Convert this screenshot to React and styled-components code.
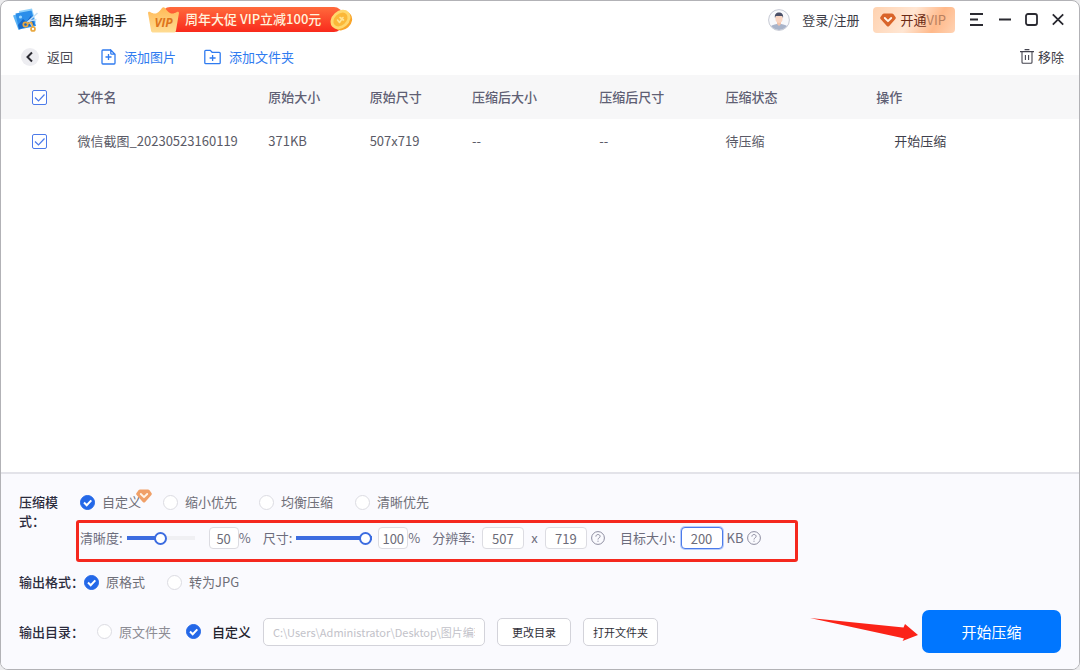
import React, { useState } from "react";
import styled, { createGlobalStyle } from "styled-components";

const files = [
  {
    id: 1,
    name: "微信截图_20230523160119",
    size: "371KB",
    dimension: "507x719",
    newSize: "--",
    newDimension: "--",
    status: "待压缩",
  },
];

const modes = ["自定义", "缩小优先", "均衡压缩", "清晰优先"];
const formats = ["原格式", "转为JPG"];

export default function App() {
  const [mode, setMode] = useState("自定义");
  const [format, setFormat] = useState("原格式");
  const [folder, setFolder] = useState("自定义");
  const [quality, setQuality] = useState(50);
  const [scale, setScale] = useState(100);

  return (
    <>
      <GlobalStyle />
      <Window>
        <TitleBar>
          <Logo />
          <Title>图片编辑助手</Title>
          <Promo href="#promo">
            <Crown />
            <PromoText>周年大促 VIP立减100元</PromoText>
            <Coin />
          </Promo>
          <Spacer />
          <Account type="button">
            <Avatar />
            登录/注册
          </Account>
          <VipButton type="button">
            <Gem />
            <span>
              开通<small>VIP</small>
            </span>
          </VipButton>
          <WindowControls />
        </TitleBar>

        <Toolbar>
          <ToolButton type="button" $color="#4a4a55">
            <BackCircle>
              <svg width="18" height="18" viewBox="0 0 18 18" fill="none">
                <path d="M11 4.5 6.500 9l4.500 4.500" stroke="#2b2b33" strokeWidth="2" />
              </svg>
            </BackCircle>
            返回
          </ToolButton>
          <ToolButton type="button" $color="#2f7bf0">
            <svg width="15" height="16" viewBox="0 0 15 16" fill="none" stroke="#2f7bf0" strokeWidth="1.3">
              <path d="M9.8 1H1.9a.9.9 0 0 0-.9.9v12.2c0 .5.4.9.9.9h11.2c.5 0 .9-.4.9-.9V5.2L9.8 1v3.4c0 .5.3.8.8.8H14M7.5 5v6M4.5 8h6" />
            </svg>
            添加图片
          </ToolButton>
          <ToolButton type="button" $color="#2f7bf0">
            <svg width="17" height="16" viewBox="0 0 17 16" fill="none" stroke="#2f7bf0" strokeWidth="1.3">
              <path d="M.8 13.8V2.2c0-.5.4-.9.9-.9h4.6l1.8 2h7.2c.5 0 .9.4.9.9v9.6c0 .5-.4.9-.9.9H1.7a.9.9 0 0 1-.9-.9ZM8.6 6v6M5.6 9h6" />
            </svg>
            添加文件夹
          </ToolButton>
          <Spacer />
          <RemoveButton type="button">
            <svg width="14" height="15" viewBox="0 0 14 15" fill="none" stroke="#44444f" strokeWidth="1.1">
              <path d="M0 2.6h14M4.6.6h4.8M2 2.6v10.6c0 .6.4 1 1 1h8c.6 0 1-.4 1-1V2.600M5.400 6v5M8.600 6v5" />
            </svg>
            移除
          </RemoveButton>
        </Toolbar>

        <Main>
          <FileTable>
            <colgroup>
              <col style={{ width: "7.1%" }} />
              <col style={{ width: "17.7%" }} />
              <col style={{ width: "9.4%" }} />
              <col style={{ width: "9.5%" }} />
              <col style={{ width: "11.8%" }} />
              <col style={{ width: "11.7%" }} />
              <col style={{ width: "14%" }} />
              <col />
            </colgroup>
            <thead>
              <tr>
                <th>
                  <CheckBox type="checkbox" aria-label="全选" defaultChecked />
                </th>
                <th>文件名</th>
                <th>原始大小</th>
                <th>原始尺寸</th>
                <th>压缩后大小</th>
                <th>压缩后尺寸</th>
                <th>压缩状态</th>
                <th>操作</th>
              </tr>
            </thead>
            <tbody>
              {files.map((file) => (
                <tr key={file.id}>
                  <td>
                    <CheckBox type="checkbox" aria-label={file.name} defaultChecked />
                  </td>
                  <td>{file.name}</td>
                  <td>{file.size}</td>
                  <td>{file.dimension}</td>
                  <td>{file.newSize}</td>
                  <td>{file.newDimension}</td>
                  <td>{file.status}</td>
                  <td>
                    <RowAction type="button">开始压缩</RowAction>
                  </td>
                </tr>
              ))}
            </tbody>
          </FileTable>
        </Main>

        <Panel>
          <ModeRow>
            <RowLabel>压缩模式：</RowLabel>
            <div>
              <Options>
                {modes.map((item, index) => (
                  <Option key={item}>
                    <Radio
                      type="radio"
                      name="mode"
                      checked={mode === item}
                      onChange={() => setMode(item)}
                    />
                    {item}
                    {index === 0 && (
                      <VipMark>
                        <Gem light />
                      </VipMark>
                    )}
                  </Option>
                ))}
              </Options>
              <Settings>
                <label htmlFor="quality">清晰度:</label>
                <Slider
                  id="quality"
                  type="range"
                  $width={68}
                  $gap={14}
                  value={quality}
                  style={{ "--fill": `${quality}%` }}
                  onChange={(e) => setQuality(e.target.value)}
                />
                <NumberBox
                  $width={30}
                  aria-label="清晰度 %"
                  value={quality}
                  onChange={(e) => setQuality(e.target.value)}
                />
                <Unit>%</Unit>
                <label htmlFor="scale">尺寸:</label>
                <Slider
                  id="scale"
                  type="range"
                  $width={76}
                  $gap={6}
                  value={scale}
                  style={{ "--fill": `${scale}%` }}
                  onChange={(e) => setScale(e.target.value)}
                />
                <NumberBox
                  $width={30}
                  aria-label="尺寸 %"
                  value={scale}
                  onChange={(e) => setScale(e.target.value)}
                />
                <Unit>%</Unit>
                <SizeLabel htmlFor="width">分辨率:</SizeLabel>
                <NumberBox id="width" $width={42} defaultValue="507" />
                <Times>x</Times>
                <NumberBox $width={42} aria-label="高" defaultValue="719" />
                <Help />
                <TargetLabel htmlFor="target">目标大小:</TargetLabel>
                <NumberBox id="target" $width={42} $active defaultValue="200" />
                <Kb>KB</Kb>
                <Help />
              </Settings>
            </div>
          </ModeRow>

          <FormatRow>
            <RowLabel>输出格式：</RowLabel>
            <Options>
              {formats.map((item) => (
                <Option key={item}>
                  <Radio
                    type="radio"
                    name="format"
                    checked={format === item}
                    onChange={() => setFormat(item)}
                  />
                  {item}
                </Option>
              ))}
            </Options>
          </FormatRow>

          <FolderRow>
            <RowLabel>输出目录：</RowLabel>
            <FolderOptions>
              <Option $muted>
                <Radio
                  type="radio"
                  name="folder"
                  checked={folder === "原文件夹"}
                  onChange={() => setFolder("原文件夹")}
                />
                原文件夹
              </Option>
              <Option $strong>
                <Radio
                  type="radio"
                  name="folder"
                  checked={folder === "自定义"}
                  onChange={() => setFolder("自定义")}
                />
                自定义
              </Option>
            </FolderOptions>
            <PathBox
              aria-label="输出目录"
              readOnly
              value="C:\Users\Administrator\Desktop\图片编辑助手"
            />
            <PlainButton type="button">更改目录</PlainButton>
            <PlainButton type="button">打开文件夹</PlainButton>
            <Spacer />
            <Arrow />
            <StartButton type="button">开始压缩</StartButton>
          </FolderRow>
        </Panel>
      </Window>
    </>
  );
}

function Logo() {
  return (
    <svg width="26" height="24" viewBox="0 0 26 24">
      <path d="M6 3 19 .5l4 14L8 19z" fill="#8fd0fb" />
      <path d="M0 7.500 5 6l3.500 14.500-3 1.500z" fill="#5bb3f5" />
      <path d="M2.500 5.500 18.500 2.500l4.500 15.500L6 21.500z" fill="#2b8eea" />
      <path d="m5 17 5-6 3.500 3 4.500-6.500 3.500 9L6 21z" fill="#1767c6" />
      <circle cx="7.500" cy="9" r="1.600" fill="#9bd8ff" />
      <path d="M24.500 5 13.500 15M23.500 11.500 16 13l4 6" fill="none" stroke="#c5dff5" strokeWidth="1.500" />
      <circle cx="12.500" cy="16.500" r="2.200" fill="none" stroke="#e9a83f" strokeWidth="1.700" />
      <circle cx="20" cy="21" r="2" fill="none" stroke="#e9a83f" strokeWidth="1.700" />
      <path d="m14.500 15.500 4-1 1.500 4.500" fill="none" stroke="#e9a83f" strokeWidth="1.500" />
    </svg>
  );
}

function Crown() {
  return (
    <CrownBox>
      <svg width="31" height="26" viewBox="0 0 31 26">
        <defs>
          <linearGradient id="crown" x1="0" y1="0" x2="0" y2="1">
            <stop offset="0" stopColor="#ffb956" />
            <stop offset="1" stopColor="#ffdc93" />
          </linearGradient>
        </defs>
        <path
          d="M0 6c0-1.200 1.200-1.600 2.200-1C4.500 6.500 7 7 9 6c2.300-1.100 3.500-3 5-5 .8-1 2.200-1 3 0 1.500 2 2.700 3.900 5 5 2 1 4.500.5 6.800-1 1-.6 2.200-.2 2.200 1L28 23.500c-.2 1.500-1 2-2.500 2h-20c-1.500 0-2.300-.5-2.500-2z"
          fill="url(#crown)"
        />
      </svg>
      <span>VIP</span>
    </CrownBox>
  );
}

function Coin() {
  return (
    <svg width="24" height="24" viewBox="0 0 24 24">
      <ellipse cx="13.500" cy="13" rx="10.500" ry="8.500" transform="rotate(-42 13.500 13)" fill="#f9a52a" />
      <ellipse cx="11.500" cy="11.500" rx="11" ry="8.500" transform="rotate(-42 11.500 11.500)" fill="#ffd76c" />
      <ellipse cx="11.500" cy="11.500" rx="8" ry="5.800" transform="rotate(-42 11.500 11.500)" fill="#fbb838" />
      <path d="m8.500 12 2 2.500M10.500 14.500l3.500-5M11 9.500l3.500 2.500" stroke="#ffe392" strokeWidth="1.600" strokeLinecap="round" />
    </svg>
  );
}

function Avatar() {
  return (
    <svg width="22" height="22" viewBox="0 0 22 22">
      <defs>
        <clipPath id="face">
          <circle cx="11" cy="11" r="10" />
        </clipPath>
      </defs>
      <circle cx="11" cy="11" r="10.400" fill="#f8f9fc" stroke="#b9bcc9" strokeWidth=".8" />
      <g clipPath="url(#face)">
        <path d="M1 22c0-4.500 3-7 10-7s10 2.500 10 7z" fill="#a9b4ca" />
        <path d="M9 12h4v3l-2 2-2-2z" fill="#f3c4ac" />
        <ellipse cx="11" cy="9.500" rx="3.600" ry="4.400" fill="#fad5c2" />
        <path d="M7 9C6.200 5.500 8.300 3.500 11 3.500S15.800 5.500 15 9l-.8-2H7.800z" fill="#4a5068" />
      </g>
    </svg>
  );
}

function Gem({ light }) {
  return (
    <svg width="16" height="14" viewBox="0 0 16 14">
      <path
        d="M4 .5h8c.6 0 1 .2 1.300.6l2.200 2.900c.5.7.4 1.400-.1 2L9.200 13c-.7.700-1.700.700-2.400 0L.6 6c-.5-.6-.6-1.300-.1-2l2.200-2.900C3 .7 3.400.5 4 .5z"
        fill={light ? "#f0a068" : "#d9642a"}
      />
      <path
        d="m4.800 5 3.200 3.200L11.200 5"
        fill="none"
        stroke="#fff3e6"
        strokeWidth="1.900"
        strokeLinecap="round"
        strokeLinejoin="round"
      />
    </svg>
  );
}

function WindowControls() {
  return (
    <Controls>
      <button type="button" aria-label="菜单">
        <svg width="13" height="13" viewBox="0 0 13 13">
          <path d="M0 1h13M0 6.500h8M0 12h13" stroke="#2a2a31" strokeWidth="1.800" />
        </svg>
      </button>
      <button type="button" aria-label="最小化">
        <svg width="12" height="13" viewBox="0 0 12 13">
          <path d="M0 6.500h12" stroke="#2a2a31" strokeWidth="1.800" />
        </svg>
      </button>
      <button type="button" aria-label="最大化">
        <svg width="13" height="13" viewBox="0 0 13 13">
          <rect x="1" y="1" width="11" height="11" rx="2" fill="none" stroke="#2a2a31" strokeWidth="1.800" />
        </svg>
      </button>
      <button type="button" aria-label="关闭">
        <svg width="12" height="13" viewBox="0 0 12 13">
          <path d="m.8 1.300 10.400 10.400M11.200 1.300.8 11.700" stroke="#2a2a31" strokeWidth="1.800" />
        </svg>
      </button>
    </Controls>
  );
}

function Help() {
  return (
    <HelpIcon width="14" height="14" viewBox="0 0 14 14" fill="none" stroke="#8d8da0">
      <circle cx="7" cy="7" r="6.400" />
      <path d="M4.900 5.600c0-1.300.9-2.100 2.100-2.100s2.100.8 2.100 1.900c0 1.400-2.100 1.500-2.100 3.100M7 9.700v1.100" />
    </HelpIcon>
  );
}

function Arrow() {
  return (
    <ArrowIcon width="108" height="28" viewBox="0 0 108 28">
      <path d="M0 0 93.500 9.500 95 6 108 17 92.500 23 94 20.500 90 19.500z" fill="#fb2318" />
    </ArrowIcon>
  );
}

const tick = (color, width, path) =>
  `url("data:image/svg+xml,%3Csvg xmlns='http://www.w3.org/2000/svg' viewBox='0 0 15 15'%3E%3Cpath d='${path}' fill='none' stroke='${color}' stroke-width='${width}'/%3E%3C/svg%3E")`;

const GlobalStyle = createGlobalStyle`
  * {
    box-sizing: border-box;
  }

  body {
    margin: 0;
    background: #ececee;
    color: #55555f;
    font: 13px/20px "Noto Sans CJK SC", sans-serif;
  }

  button,
  input {
    margin: 0;
    padding: 0;
    font: inherit;
    color: inherit;
  }

  button {
    border: 0;
    background: none;
    cursor: pointer;
  }

  svg {
    display: block;
    flex: none;
  }
`;

const Window = styled.div`
  display: flex;
  flex-direction: column;
  min-height: 100vh;
  border: 1px solid #b2b2b6;
  border-radius: 8px;
  background: #fff;
  overflow: hidden;
`;

const Spacer = styled.div`
  flex: 1;
`;

const TitleBar = styled.header`
  display: flex;
  align-items: center;
  height: 37px;
  padding: 0 15px 0 12px;
`;

const Title = styled.h1`
  margin: 0 21px 0 10px;
  font-size: 13px;
  font-weight: 500;
  color: #1e1e26;
`;

const Promo = styled.a`
  display: flex;
  align-items: center;
  text-decoration: none;
`;

const PromoText = styled.span`
  height: 25px;
  margin: 0 -13px 0 -17px;
  padding: 0 21px 0 23px;
  border-radius: 8px;
  background: linear-gradient(#ff6a3c, #f92a1c);
  font-weight: 500;
  line-height: 24px;
  color: #fff3dc;
`;

const CrownBox = styled.span`
  position: relative;
  z-index: 1;

  span {
    position: absolute;
    inset: 6px 0 0;
    font: italic 700 12px/20px "Open Sans", sans-serif;
    text-align: center;
    color: #de741c;
  }
`;

const Account = styled.button`
  display: flex;
  align-items: center;
  gap: 12px;
  color: #3c3c46;
`;

const VipButton = styled.button`
  display: flex;
  align-items: center;
  gap: 4px;
  height: 26px;
  margin: 0 15px 0 14px;
  padding: 0 9px 0 7px;
  border-radius: 4px;
  background: linear-gradient(120deg, #ffd2b0, #ffe6d3 45%, #ffb98a 75%, #ffd3b4);
  color: #6b2a14;

  small {
    font-size: 13px;
    color: #b9805f;
  }
`;

const Controls = styled.div`
  display: flex;
  gap: 14px;

  button:first-child {
    margin-right: 2px;
  }
`;

const Toolbar = styled.div`
  display: flex;
  align-items: center;
  gap: 28px;
  height: 37px;
  padding: 0 15px 0 20px;
`;

const ToolButton = styled.button`
  display: flex;
  align-items: center;
  gap: 8px;
  color: ${(props) => props.$color};
`;

const RemoveButton = styled(ToolButton)`
  gap: 4px;
  color: #3c3c46;
`;

const BackCircle = styled.span`
  border-radius: 50%;
  background: #ededf1;
`;

const Main = styled.main`
  flex: 1;
`;

const FileTable = styled.table`
  width: 100%;
  table-layout: fixed;
  border-collapse: collapse;

  th,
  td {
    height: 44px;
    padding: 0;
    text-align: left;
    font-weight: 400;
    color: #5a5a66;
    white-space: nowrap;
  }

  th {
    background: #f7f7f8;
    font-weight: 500;
    color: #5f5f74;
  }

  th:first-child,
  td:first-child {
    text-align: center;
  }
`;

const CheckBox = styled.input`
  appearance: none;
  display: block;
  width: 15px;
  height: 15px;
  margin: 0 auto;
  border: 1px solid #4c7bea;
  border-radius: 2px;
  background: #fff;

  &:checked {
    background: #fff ${tick("%234c7bea", 1.2, "m3 7.5 3.500 3.500L12.500 4.500")} center / 15px;
  }
`;

const RowAction = styled.button`
  margin-left: 18px;
  color: #3f3f4c;
`;

const Panel = styled.section`
  padding: 18px 18px 16px;
  border-top: 2px solid #e3e3e9;
  background: #fafafe;
`;

const ModeRow = styled.div`
  display: grid;
  grid-template-columns: 46px auto;
  column-gap: 15px;
`;

const FormatRow = styled.div`
  display: flex;
  margin-top: 23px;
`;

const FolderRow = styled.div`
  display: flex;
  align-items: center;
  margin-top: 18px;
`;

const RowLabel = styled.div`
  width: 65px;
  line-height: 19px;
  font-weight: 500;
  color: #2b2b3c;

  ${ModeRow} & {
    width: auto;
  }
`;

const Options = styled.div`
  display: flex;
  gap: 22px;
`;

const FolderOptions = styled(Options)`
  gap: 15px;
  margin: 0 12px 0 13px;
`;

const Option = styled.label`
  position: relative;
  display: flex;
  align-items: center;
  gap: ${(props) => (props.$strong ? 11 : 7)}px;
  font-weight: ${(props) => (props.$strong ? 500 : 400)};
  color: ${(props) => (props.$strong ? "#23232d" : props.$muted ? "#8c8c94" : "#6f6f78")};
`;

const Radio = styled.input`
  appearance: none;
  width: 15px;
  height: 15px;
  border: 1px solid #dcdce2;
  border-radius: 50%;
  background: #fff;

  &:checked {
    border-color: #2468e8;
    background: #2468e8 ${tick("white", 2, "m4 7.500 2.700 2.700 4.600-4.800")} center / 15px;
  }
`;

const VipMark = styled.span`
  position: absolute;
  top: -3px;
  right: -11px;
`;

const Settings = styled.div`
  position: relative;
  display: flex;
  align-items: center;
  width: fit-content;
  height: 22px;
  margin-top: 15px;
  color: #6c6c7c;

  &::after {
    content: "";
    position: absolute;
    inset: -7px -37px -13px -4px;
    border: 3px solid #f5281e;
    border-radius: 3px;
    pointer-events: none;
  }
`;

const Slider = styled.input`
  appearance: none;
  width: ${(props) => props.$width}px;
  height: 14px;
  margin: 0 ${(props) => props.$gap}px 0 4px;
  background: linear-gradient(90deg, #3c6ce0 var(--fill), #f0f0f3 var(--fill)) center / 100% 4px no-repeat;

  &::-webkit-slider-thumb {
    appearance: none;
    width: 13px;
    height: 13px;
    border: 2px solid #3c6ce0;
    border-radius: 50%;
    background: #fff;
  }
`;

const NumberBox = styled.input`
  width: ${(props) => props.$width}px;
  height: 22px;
  border: 1px solid ${(props) => (props.$active ? "#4c7bea" : "#dcdce2")};
  border-radius: 4px;
  background: #fff;
  box-shadow: ${(props) => (props.$active ? "0 0 0 1px #b9cdfa" : "none")};
  text-align: center;
  color: #6c6c78;
`;

const Unit = styled.span`
  width: 24px;
`;

const SizeLabel = styled.label`
  margin-right: 7px;
`;

const TargetLabel = styled.label`
  margin: 0 5px 0 15px;
`;

const Times = styled.span`
  width: 21px;
  text-align: center;
`;

const Kb = styled.span`
  margin-left: 4px;
`;

const HelpIcon = styled.svg`
  margin-left: 4px;
`;

const PathBox = styled.input`
  width: 222px;
  height: 28px;
  padding: 0 9px;
  border: 1px solid #d3d3da;
  border-radius: 5px;
  background: #fff;
  font-size: 11px;
  color: #c2c2c9;
`;

const PlainButton = styled.button`
  height: 28px;
  margin-left: 12px;
  padding: 0 9px;
  min-width: 74px;
  border: 1px solid #d3d3da;
  border-radius: 5px;
  background: #fff;
  font-size: 11px;
  color: #2f2f38;
`;

const ArrowIcon = styled.svg`
  margin-right: 4px;
`;

const StartButton = styled.button`
  width: 139px;
  height: 43px;
  border-radius: 7px;
  background: #0076ff;
  font-size: 15px;
  color: #fff;
`;
